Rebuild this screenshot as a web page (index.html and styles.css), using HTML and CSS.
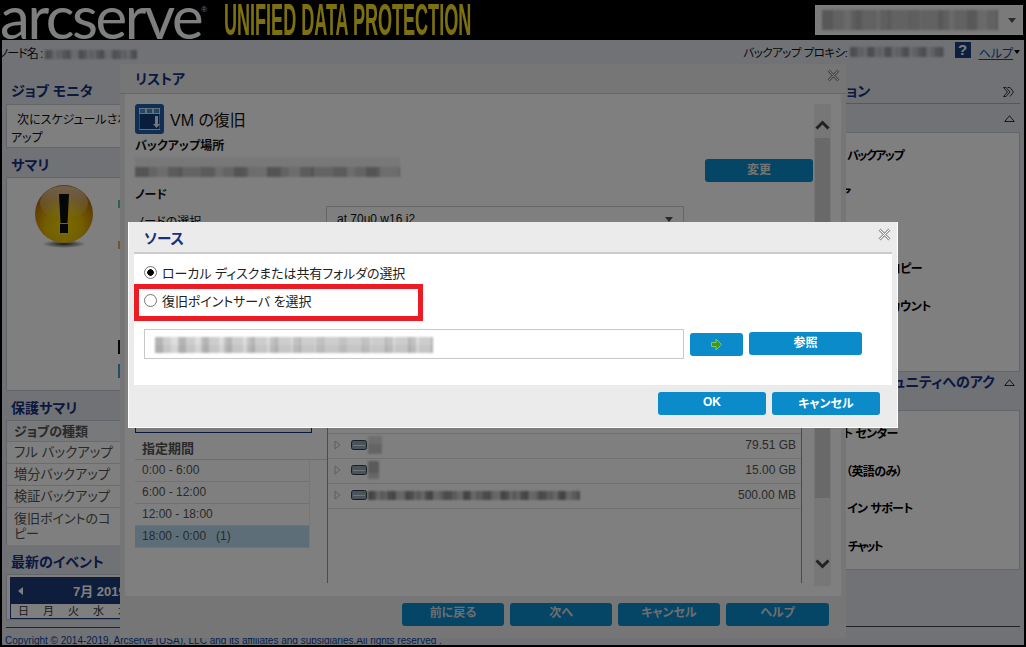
FILE: index.html
```html
<!DOCTYPE html>
<html lang="ja">
<head>
<meta charset="utf-8">
<title>Arcserve UDP</title>
<link rel="stylesheet" href="styles.css">
</head>
<body>
<div class="app">
  <header class="top">
    <div class="brand"><span class="logo">arcserve</span><sup class="reg">®</sup></div>
    <div class="product"><span>UNIFIED DATA PROTECTION</span></div>
    <div class="server-combo"><span class="pix pix-combo"></span><span class="caret"></span></div>
  </header>
  <div class="subbar">
    <div class="node-name"><span class="node-text">ノード名 :</span><span class="pix pix-node"></span></div>
    <div class="proxy"><span class="proxy-text">バックアップ プロキシ:</span><span class="pix pix-proxy"></span>
      <span class="help-icon">?</span><a class="help-link">ヘルプ</a><span class="help-caret"></span>
    </div>
  </div>
  <main class="main">
    <aside class="left">
      <h2 class="head head-first">ジョブ モニタ</h2>
      <div class="box job-box"><span class="job-text">次にスケジュールされた<br></span>アップ</div>
      <h2 class="head">サマリ</h2>
      <div class="box summary-box">
        <svg class="warn" width="62" height="66" viewBox="0 0 62 66">
          <defs><radialGradient id="gold" cx="50%" cy="72%" r="62%">
            <stop offset="0" stop-color="#f2dc00"/><stop offset=".5" stop-color="#e6bc00"/><stop offset="1" stop-color="#b86c08"/>
          </radialGradient>
          <linearGradient id="gloss" x1="0" y1="0" x2="0" y2="1"><stop offset="0" stop-color="#fff" stop-opacity=".6"/><stop offset="1" stop-color="#fff" stop-opacity="0"/></linearGradient>
          <radialGradient id="drop"><stop offset="0" stop-color="#000" stop-opacity=".8"/><stop offset="1" stop-color="#000" stop-opacity="0"/></radialGradient></defs>
          <ellipse cx="31" cy="60" rx="22" ry="4" fill="url(#drop)"/>
          <circle cx="31" cy="30" r="29" fill="url(#gold)"/>
          <ellipse cx="31" cy="19" rx="24" ry="17" fill="url(#gloss)"/>
          <path d="M26 10h10l-1.500 29h-7z" fill="#0c0c0c"/>
          <rect x="27" y="40" width="8" height="9" fill="#0c0c0c"/>
        </svg>
        <div class="marks"><i class="mark-green"></i><i class="mark-orange"></i><i class="mark-dark"></i><i class="mark-teal"></i></div>
      </div>
      <h2 class="head">保護サマリ</h2>
      <div class="box sum-table">
        <div class="sum-row sum-head">ジョブの種類</div>
        <div class="sum-row">フル バックアップ</div>
        <div class="sum-row sum-mid">増分バックアップ</div>
        <div class="sum-row sum-mid">検証バックアップ</div>
        <div class="sum-row sum-tall">復旧ポイントのコ<br>ピー</div>
      </div>
      <h2 class="head head-event">最新のイベント</h2>
      <div class="box cal-mini">
        <div class="cal-head"><span class="cal-prev"></span><span class="cal-month">7月 2019</span></div>
        <div class="cal-days"><span>日</span><span>月</span><span>火</span><span>水</span><span>木</span></div>
      </div>
      <hr class="rule">
    </aside>
    <aside class="right">
      <div class="r-title"><span class="r-title-text">ョン</span>
        <svg class="dbl" width="11" height="10" viewBox="0 0 11 10"><path d="M.5.5h2.500l4 4.500-4 4.500H.5l4-4.500zM4.500.5H7l3.500 4.500L7 9.500" fill="none" stroke="#333"/></svg>
      </div>
      <div class="r-sec"><svg class="tri" width="11" height="7" viewBox="0 0 11 7"><path d="M.7 6.500h9.600L5.500.8z" fill="none" stroke="#333"/></svg></div>
      <div class="box r-box r-box-a">
        <div class="act act-1">バックアップ</div>
        <div class="act act-2">ア</div>
        <div class="act"></div>
        <div class="act act-4">コピー</div>
        <div class="act act-5">アカウント</div>
        <div class="act"></div>
      </div>
      <div class="r-sec r-sec-b"><span class="r-sec-text">コミュニティへのアク</span><svg class="tri" width="11" height="7" viewBox="0 0 11 7"><path d="M.7 6.500h9.600L5.500.8z" fill="none" stroke="#333"/></svg></div>
      <div class="box r-box r-box-b">
        <div class="act act-6">ト センター</div>
        <div class="act act-7">（英語のみ）</div>
        <div class="act act-8">イン サポート</div>
        <div class="act act-9">チャット</div>
      </div>
      <hr class="rule">
    </aside>
  </main>
  <footer class="copy">Copyright © 2014-2019, Arcserve (USA), LLC and its affiliates and subsidiaries.All rights reserved .</footer>

  <section class="restore">
    <div class="restore-title"><span>リストア</span>
      <svg class="close" width="13" height="13" viewBox="0 0 13 13"><path d="M1.500 1.500l10 10M11.500 1.500l-10 10" stroke="#999" stroke-width="3"/><path d="M1.500 1.500l10 10M11.500 1.500l-10 10" stroke="#fff" stroke-width="1"/></svg>
    </div>
    <div class="restore-body">
      <div class="restore-content">
        <div class="vm-title">
          <svg width="29" height="30" viewBox="0 0 29 30">
            <rect width="29" height="30" rx="3" fill="#1f5fa8"/>
            <rect x="4" y="4" width="21" height="22" fill="#cfe0f2"/>
            <rect x="4.500" y="10" width="20" height="15" fill="#123a7a"/>
            <rect x="5" y="5" width="5" height="4" fill="#3d8ed0"/><rect x="12" y="5" width="5" height="4" fill="#3d8ed0"/><rect x="19" y="5" width="5" height="4" fill="#3d8ed0"/>
            <path d="M20 12h3v8h2l-3.500 4-3.500-4h2z" fill="#e8eef6"/>
          </svg>
          <span>VM の復旧</span>
        </div>
        <div class="label">バックアップ場所</div>
        <div class="location"><span class="pix pix-loc"></span><button class="btn btn-change">変更</button></div>
        <div class="label label-node">ノード</div>
        <div class="node-row"><span class="node-label">ノードの選択</span><div class="select"><span>at 70u0 w16 i2</span><i class="select-caret"></i></div></div>
        <div class="split">
          <div class="sessions">
            <div class="date-box"></div>
            <div class="period-head">指定期間</div>
            <div class="period">0:00 - 6:00</div>
            <div class="period">6:00 - 12:00</div>
            <div class="period">12:00 - 18:00</div>
            <div class="period period-on">18:00 - 0:00 &nbsp; (1)</div>
          </div>
          <div class="disks">
            <div class="disk"><svg class="tw" width="7" height="10" viewBox="0 0 7 10"><path d="M1 1l5 4-5 4z" fill="none" stroke="#bbb"/></svg><svg class="hdd" width="16" height="10" viewBox="0 0 16 10"><rect x=".5" y=".5" width="15" height="9" rx="2" fill="#9aa6b6" stroke="#2a3a50"/><rect x="2" y="5" width="12" height="1" fill="#e4e8ee"/><rect x="12" y="2" width="2" height="1" fill="#3ec83e"/></svg><span class="pix pix-d1"></span><b>79.51 GB</b></div>
            <div class="disk"><svg class="tw" width="7" height="10" viewBox="0 0 7 10"><path d="M1 1l5 4-5 4z" fill="none" stroke="#bbb"/></svg><svg class="hdd" width="16" height="10" viewBox="0 0 16 10"><rect x=".5" y=".5" width="15" height="9" rx="2" fill="#9aa6b6" stroke="#2a3a50"/><rect x="2" y="5" width="12" height="1" fill="#e4e8ee"/><rect x="12" y="2" width="2" height="1" fill="#3ec83e"/></svg><span class="pix pix-d2"></span><b>15.00 GB</b></div>
            <div class="disk"><svg class="tw" width="7" height="10" viewBox="0 0 7 10"><path d="M1 1l5 4-5 4z" fill="none" stroke="#bbb"/></svg><svg class="hdd" width="16" height="10" viewBox="0 0 16 10"><rect x=".5" y=".5" width="15" height="9" rx="2" fill="#9aa6b6" stroke="#2a3a50"/><rect x="2" y="5" width="12" height="1" fill="#e4e8ee"/><rect x="12" y="2" width="2" height="1" fill="#3ec83e"/></svg><span class="pix pix-d3"></span><b>500.00 MB</b></div>
          </div>
        </div>
      </div>
      <div class="scrollbar">
        <div class="sb-btn"><svg width="15" height="10" viewBox="0 0 15 10"><path d="M1.500 8.500 7.500 2.500l6 6" fill="none" stroke="#444" stroke-width="3"/></svg></div>
        <div class="sb-thumb"></div>
        <div class="sb-track"><svg width="15" height="10" viewBox="0 0 15 10"><path d="M1.500 1.500 7.500 7.500l6-6" fill="none" stroke="#444" stroke-width="3"/></svg></div>
      </div>
    </div>
    <div class="restore-foot">
      <button class="btn btn-nav">前に戻る</button>
      <button class="btn btn-nav">次へ</button>
      <button class="btn btn-nav">キャンセル</button>
      <button class="btn btn-nav">ヘルプ</button>
    </div>
  </section>

  <div class="mask"></div>

  <section class="source">
    <div class="source-title"><span>ソース</span>
      <svg class="close" width="13" height="13" viewBox="0 0 13 13"><path d="M1.500 1.500l10 10M11.500 1.500l-10 10" stroke="#999" stroke-width="3"/><path d="M1.500 1.500l10 10M11.500 1.500l-10 10" stroke="#fff" stroke-width="1"/></svg>
    </div>
    <div class="source-body">
      <label class="radio-row"><span class="radio radio-on"></span>ローカル ディスクまたは共有フォルダの選択</label>
      <label class="radio-row"><span class="radio"></span>復旧ポイントサーバ を選択</label>
      <div class="path-row">
        <div class="path-input"><span class="pix pix-path"></span></div>
        <button class="btn btn-go"><svg width="13" height="13" viewBox="0 0 13 13"><path d="M6 1l5.500 5.500L6 12V8.500H1.500v-4H6z" fill="#3f9a1c" stroke="#a8d860" stroke-width=".7"/></svg></button>
        <button class="btn btn-browse">参照</button>
      </div>
      <div class="highlight"></div>
    </div>
    <div class="source-foot">
      <button class="btn btn-ok">OK</button>
      <button class="btn btn-ok">キャンセル</button>
    </div>
  </section>
</div>
</body>
</html>
```
FILE: styles.css
```css
* { box-sizing: border-box; }
html, body { margin: 0; height: 100%; background: #000; }
body {
  font-family: "Liberation Sans", "Noto Sans CJK JP", sans-serif;
  font-size: 12px;
  font-feature-settings: "palt";
  color: #111;
  overflow: hidden;
}
.app {
  position: relative;
  width: 1026px;
  height: 647px;
  display: flex;
  flex-direction: column;
  overflow: hidden;
  background: #e0e4ec;
  border: solid #000;
  border-width: 0 2px 2px 2px;
}

/* header */
.top {
  height: 40px;
  margin: 0 -2px;
  background: #000;
  display: flex;
  align-items: flex-start;
  flex: none;
}
.brand { width: 224px; height: 40px; flex: none; color: #fff; white-space: nowrap; }
.logo {
  font-family: "Lato", sans-serif;
  font-weight: 400;
  font-size: 60px;
  line-height: 33px;
  letter-spacing: -2.400px;
  display: inline-block;
}
.reg { font-size: 8px; vertical-align: top; line-height: 20px; color: #ddd; }
.product { flex: 1; min-width: 0; height: 40px; }
.product span {
  display: block;
  width: max-content;
  font-family: "Liberation Sans Narrow", "Liberation Sans", sans-serif;
  font-weight: 700;
  font-size: 44px;
  line-height: 40px;
  color: #f8e020;
  white-space: nowrap;
  transform: scaleX(.41);
  transform-origin: left center;
}
.server-combo {
  flex: none;
  width: 208px;
  height: 30px;
  margin: 5px 3px 0 0;
  border: 1px solid #fff;
  background: #f4f4f4;
  display: flex;
  align-items: center;
  padding-left: 6px;
  justify-content: space-between;
}
.caret { width: 0; height: 0; margin-right: 6px; border: 4px solid transparent; border-top: 5px solid #555; border-bottom: 0; }

/* blurred values */
.pix { display: inline-block; vertical-align: middle; filter: blur(.8px); }
.pix-combo {
  width: 176px; height: 20px;
  background:
    repeating-linear-gradient(90deg, rgba(0,0,0,.1) 0 11px, transparent 11px 29px),
    repeating-linear-gradient(90deg, rgba(0,0,0,.07) 0 22px, transparent 22px 33px),
    #d4d4d4;
}
.pix-node {
  width: 92px; height: 9px; margin-left: 3px;
  background:
    repeating-linear-gradient(90deg, rgba(0,0,0,.2) 0 8px, transparent 8px 17px),
    repeating-linear-gradient(90deg, rgba(0,0,0,.1) 0 5px, transparent 5px 11px),
    #d2d5db;
}
.pix-proxy {
  width: 94px; height: 10px; margin-left: 2px;
  background:
    repeating-linear-gradient(90deg, rgba(0,0,0,.2) 0 8px, transparent 8px 17px),
    repeating-linear-gradient(90deg, rgba(0,0,0,.08) 0 5px, transparent 5px 9px),
    #cfd2d8;
}
.pix-loc {
  width: 265px; height: 20px;
  background:
    linear-gradient(#f0f0f0 0 10px, transparent 10px),
    repeating-linear-gradient(90deg, rgba(0,0,0,.16) 0 14px, transparent 14px 33px),
    repeating-linear-gradient(90deg, rgba(0,0,0,.08) 0 22px, transparent 22px 44px),
    #dadada;
}
.pix-path {
  width: 278px; height: 16px;
  background:
    repeating-linear-gradient(90deg, rgba(0,0,0,.12) 0 8px, transparent 8px 23px),
    repeating-linear-gradient(90deg, rgba(0,0,0,.07) 0 16px, transparent 16px 24px),
    linear-gradient(transparent 0 8px, rgba(0,0,0,.04) 8px),
    #dddddd;
}
.pix-d1, .pix-d2 { width: 14px; height: 18px; background: linear-gradient(#dcdcdc 0 8px, #c8c8c8 8px); }
.pix-d2 { width: 11px; background: linear-gradient(#b4b4b4 0 12px, #cccccc 12px); }
.pix-d3 {
  width: 212px; height: 9px;
  background:
    repeating-linear-gradient(90deg, rgba(0,0,0,.26) 0 8px, transparent 8px 19px),
    repeating-linear-gradient(90deg, rgba(0,0,0,.12) 0 5px, transparent 5px 12px),
    #cecece;
}

/* sub bar */
.subbar {
  height: 24px;
  flex: none;
  display: flex;
  justify-content: space-between;
  align-items: center;
  white-space: nowrap;
  font-size: 12px;
}
.node-name { margin-left: -3px; }
.node-text { letter-spacing: -1px; }
.proxy { display: flex; align-items: center; margin-right: 4px; }
.proxy-text { font-size: 11.500px; letter-spacing: -.5px; }
.help-icon {
  width: 16px; height: 16px;
  margin: -4px 0 0 11px;
  background: #1b3f7d;
  color: #fff;
  font-weight: 700;
  font-size: 15px;
  line-height: 16px;
  text-align: center;
}
.help-link { margin-left: 8px; color: #12488e; text-decoration: underline; }
.help-caret { width: 0; height: 0; margin-left: 1px; border: 3px solid transparent; border-top: 4px solid #000; border-bottom: 0; }

/* main */
.main { flex: 1; display: flex; justify-content: space-between; min-height: 0; }
.left { width: 240px; padding-left: 4px; flex: none; }
.head {
  margin: 8px 0 3px 5px;
  font-size: 14px;
  line-height: 18px;
  font-weight: 700;
  color: #17307e;
  white-space: nowrap;
}
.head-first { margin-top: 18px; margin-bottom: 4px; }
.box { background: #fff; border: 1px solid #c4cad4; }
.job-box { height: 44px; padding: 6px 4px; line-height: 18px; }
.job-text { padding-left: 6px; }
.summary-box { height: 214px; display: flex; padding: 6px 0 0 26px; }
.warn { flex: none; }
.marks { margin-left: 23px; display: flex; flex-direction: column; width: 4px; }
.marks i { display: block; width: 2px; }
.mark-green { height: 8px; margin-top: 16px; background: #58c8a8; }
.mark-orange { height: 8px; margin-top: 33px; background: #e8a860; }
.mark-dark { height: 14px; margin-top: 91px; background: #111; }
.mark-teal { height: 14px; margin-top: 10px; background: #3aa0c8; }
.sum-table { height: 125px; background: #f6f7fa; }
.sum-row {
  height: 22px;
  padding: 0 0 0 7px;
  line-height: 21px;
  font-size: 13.500px;
  color: #555;
  background: #fff;
  border-bottom: 1px solid #d4d8e0;
}
.sum-mid { font-size: 13.200px; }
.sum-head { font-weight: 700; background: #f0f2f6; height: 21px; font-size: 13px; }
.sum-tall { height: 37px; font-size: 13px; line-height: 15px; padding-top: 3px; border-bottom: 0; }
.cal-mini { height: 46px; padding: 2px 0 0 3px; background: #fff; }
.cal-head { height: 27px; background: #1c3a78; display: flex; align-items: center; color: #fff; font-weight: 700; font-size: 13px; }
.cal-prev { width: 0; height: 0; margin-left: 8px; border: 4px solid transparent; border-right: 5px solid #fff; border-left: 0; }
.cal-month { margin-left: 50px; }
.cal-days { display: flex; height: 15px; line-height: 15px; padding-left: 7px; gap: 13px; border: 1px solid #1c3a78; border-top: 0; color: #333; }
.cal-days span { width: 12px; font-size: 11px; }
.rule { border: 0; border-top: 1px solid #444; margin: 7px 0 0; }

/* right */
.right { width: 186px; margin-right: 4px; flex: none; }
.r-title {
  height: 40px;
  padding: 18px 6px 0 0;
  display: flex;
  justify-content: space-between;
  line-height: 18px;
  border-bottom: 1px solid #aab0bc;
  font-size: 14px;
  font-weight: 700;
  color: #17307e;
}
.r-title-text { margin-left: 12px; }
.dbl { margin-top: 5px; }
.r-sec { height: 28px; display: flex; align-items: center; justify-content: flex-end; padding-right: 5px; }
.r-sec-b { height: 38px; padding-bottom: 18px; justify-content: space-between; color: #17307e; font-size: 14px; font-weight: 700; white-space: nowrap; }
.r-sec-text { margin-left: 33px; line-height: 18px; }
.tri { flex: none; }
.r-box { padding: 3px 0; overflow: hidden; }
.r-box-a { height: 240px; padding-top: 4px; }
.r-box-b { height: 160px; padding-top: 4px; }
.act { height: 38px; line-height: 38px; font-weight: 700; font-size: 12px; letter-spacing: -.6px; white-space: nowrap; color: #000; }
.act-1 { padding-left: 12px; letter-spacing: -1.500px; }
.act-2 { padding-left: 5px; }
.act-4 { padding-left: 54px; margin-top: -1px; }
.act-5 { padding-left: 44px; }
.act-6 { padding-left: 8px; }
.act-7 { padding-left: 11px; }
.act-8 { padding-left: 12px; margin-top: -1px; }
.act-9 { padding-left: 13px; letter-spacing: -2px; }
.right > .rule { margin-top: 56px; }

.copy {
  height: 11px;
  flex: none;
  font-size: 10px;
  line-height: 14px;
  padding-left: 3px;
  color: #0a3f96;
  white-space: nowrap;
}

/* restore dialog */
.restore {
  position: absolute;
  left: 118px;
  top: 64px;
  width: 726px;
  height: 574px;
  padding: 0 5px;
  background: #ededed;
  display: flex;
  flex-direction: column;
  z-index: 1;
}
.restore-title {
  height: 30px;
  flex: none;
  margin: 0 -5px;
  padding: 4px 6px 0 15px;
  border-bottom: 1px solid #ccc;
  display: flex;
  justify-content: space-between;
  font-size: 14px;
  font-weight: 700;
  color: #17307e;
}
.close { margin-top: 1px; }
.restore-body { flex: 1; background: #fff; display: flex; padding: 10px; min-height: 0; }
.restore-content { width: 679px; flex: none; }
.vm-title { display: flex; align-items: center; gap: 6px; height: 30px; font-size: 16px; }
.label { margin-top: 3px; height: 18px; line-height: 18px; font-weight: 700; }
.location { display: flex; justify-content: space-between; margin-top: 2px; height: 25px; }
.location .pix { align-self: flex-start; }
.btn {
  border: 0;
  border-radius: 3px;
  background: #0b8bca;
  color: #fff;
  font: 700 12px "Liberation Sans", "Noto Sans CJK JP", sans-serif;
  font-feature-settings: "palt";
  padding: 0 0 3px;
}
.btn-change { width: 108px; height: 23px; margin: 2px 1px 0 0; padding-bottom: 5px; color: #e8e8e8; }
.label-node { margin-top: 4px; }
.node-row { display: flex; margin-top: 2px; height: 30px; }
.node-label { width: 191px; padding-top: 6px; }
.select { width: 358px; height: 30px; border: 1px solid #ccc; padding: 5px 10px; display: flex; justify-content: space-between; }
.select-caret { width: 0; height: 0; margin-top: 5px; border: 4px solid transparent; border-top: 5px solid #555; border-bottom: 0; }
.split { display: flex; height: 347px; }
.sessions { width: 192px; flex: none; }
.date-box { height: 197px; width: 177px; border: 1px solid #17307e; border-top: 0; background: #f2f6fb; }
.period-head {
  height: 27px;
  padding: 7px 0 0 7px;
  font-weight: 700;
  font-size: 13px;
  line-height: 17px;
  color: #555;
  border-bottom: 1px solid #ddd;
}
.period {
  width: 175px;
  height: 22px;
  padding-left: 7px;
  line-height: 21px;
  font-size: 12px;
  color: #555;
  border-bottom: 1px solid #e4e4e4;
  border-right: 1px solid #eee;
}
.period-on { background: #bcdcf0; }
.disks { width: 475px; flex: none; border-left: 1px solid #999; border-right: 1px solid #999; padding-top: 197px; }
.disk {
  height: 25px;
  display: flex;
  align-items: center;
  border-top: 1px solid #e0e0e0;
  padding: 0 5px 2px 6px;
}
.disk:last-child { border-bottom: 1px solid #e0e0e0; height: 26px; }
.disk b { margin-left: auto; font-weight: 400; color: #555; font-size: 12px; }
.tw { margin-right: 10px; flex: none; }
.hdd { margin-right: 1px; flex: none; }
.scrollbar { width: 17px; display: flex; flex-direction: column; flex: none; height: 482px; background: #eee; }
.sb-btn { height: 34px; display: flex; align-items: center; justify-content: center; padding-top: 8px; background: #eee; }
.sb-thumb { height: 360px; margin: 0 1px; background: #d2d2d2; }
.sb-track { flex: 1; display: flex; justify-content: center; align-items: flex-end; padding-bottom: 17px; }
.restore-foot {
  height: 42px;
  flex: none;
  padding: 7px 12px 0 0;
  display: flex;
  justify-content: flex-end;
  gap: 6px;
}
.btn-nav { width: 102px; height: 23px; color: #ddd; padding-bottom: 6px; }
.btn-nav:last-child { width: 103px; }

.mask { position: absolute; inset: 0 -2px -2px; background: rgba(0,0,0,.5); z-index: 2; }

/* source dialog */
.source {
  position: absolute;
  left: 126px;
  top: 222px;
  width: 770px;
  height: 206px;
  background: #ebebeb;
  border: 1px solid #fff;
  border-top: 0;
  z-index: 3;
  display: flex;
  flex-direction: column;
  padding: 0 5px;
}
.source-title {
  height: 30px;
  flex: none;
  margin-left: -5px;
  padding: 5px 1px 0 15px;
  display: flex;
  justify-content: space-between;
  font-size: 14.500px;
  font-weight: 700;
  color: #17307e;
}
.source-body {
  position: relative;
  flex: none;
  height: 133px;
  background: #fff;
  border-top: 2px solid #ccc;
  padding: 4px 0 0 10px;
}
.radio-row { display: flex; align-items: center; height: 28px; gap: 5px; font-size: 13px; letter-spacing: -.08px; color: #222; }
.radio {
  width: 13px; height: 13px;
  border-radius: 50%;
  border: 1px solid #777;
  background: #fff;
  flex: none;
}
.radio-on { background: radial-gradient(circle, #000 0 3px, #fff 3.500px); }
.path-row { display: flex; align-items: flex-start; margin-top: 15px; }
.path-input { width: 540px; height: 30px; border: 1px solid #c8c8c8; padding: 7px 0 0 10px; }
.path-input .pix { display: block; }
.btn-go { width: 53px; height: 23px; margin: 4px 0 0 6px; padding: 0; display: flex; align-items: center; justify-content: center; }
.btn-browse { width: 113px; height: 23px; margin: 3px 0 0 6px; padding-bottom: 5px; }
.highlight {
  position: absolute;
  left: 0;
  top: 30px;
  width: 289px;
  height: 37px;
  border: 5px solid #ed1c24;
}
.source-foot {
  flex: 1;
  display: flex;
  justify-content: flex-end;
  gap: 6px;
  padding: 7px 12px 0 0;
}
.btn-ok { width: 108px; height: 23px; }
```
